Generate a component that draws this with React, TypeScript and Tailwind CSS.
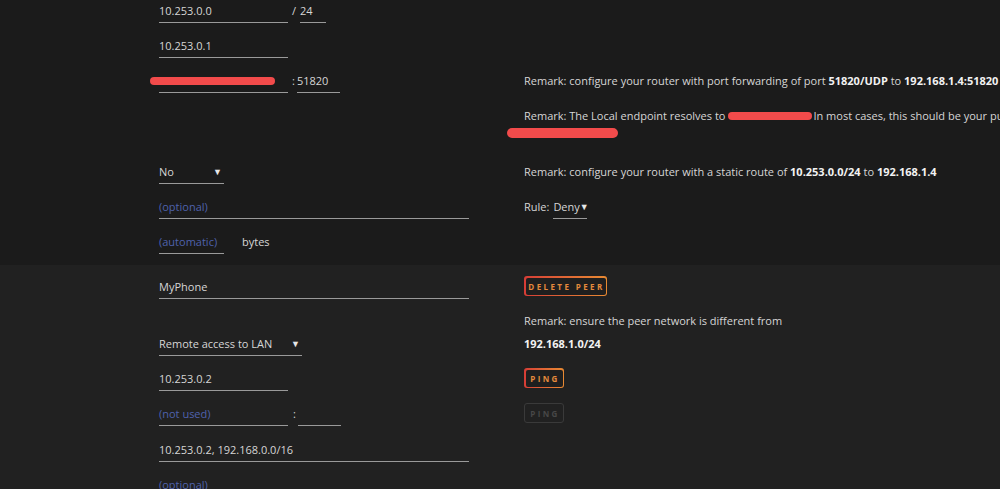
import React from 'react';

const font = { fontFamily: '"Open Sans", "Liberation Sans", sans-serif' };

interface FieldProps {
  value?: string;
  placeholder?: string;
  width: string;
  select?: boolean;
  children?: React.ReactNode;
}

const Field: React.FC<FieldProps> = ({ value, placeholder, width, select, children }) => (
  <div className={`${width} flex h-[20px] items-start justify-between border-b border-[#9a9a9a] leading-[15px]`}>
    {children ?? (
      <span className={value ? 'text-[#d6d6d6]' : 'text-[#4f62ad]'}>{value ?? placeholder}</span>
    )}
    {select && <span className="text-[9px] text-[#e6e6e6] pr-[2px]">▼</span>}
  </div>
);

const Blob: React.FC<{ className: string }> = ({ className }) => (
  <span className={`inline-block rounded-full bg-[#f24b4b] ${className}`} />
);

const Row: React.FC<{ h: string; left?: React.ReactNode; right?: React.ReactNode }> = ({ h, left, right }) => (
  <div className={`grid grid-cols-[365px_1fr] ${h}`}>
    <div className="flex items-start">{left}</div>
    <div className="flex flex-col items-start whitespace-nowrap leading-[15px]">{right}</div>
  </div>
);

const Btn: React.FC<{ label: string; width: string; disabled?: boolean }> = ({ label, width, disabled }) =>
  disabled ? (
    <div className={`${width} -mt-[2.5px] h-[20px] rounded-[3px] border-[1.5px] border-[#3a3a3a] flex items-center justify-center pl-[2px] text-[8px] font-bold tracking-[2.4px] text-[#474747]`}>
      {label}
    </div>
  ) : (
    <div className={`${width} -mt-[2.5px] h-[20px] rounded-[3px] bg-gradient-to-r from-[#d63c36] to-[#e88a32] p-[1.5px]`}>
      <div className="h-full w-full rounded-[2px] bg-[#1f1f1f] flex items-center justify-center pl-[2px] text-[8px] font-bold tracking-[2.4px] text-[#e58a3c]">
        {label}
      </div>
    </div>
  );

export default function App() {
  return (
    <div style={font} className="h-[489px] w-[1000px] overflow-hidden text-[11px] text-[#d6d6d6]">
      {/* interface section */}
      <div className="h-[265px] bg-[#1b1b1b] pl-[159px] pt-[3px]">
        <Row
          h="h-[35px]"
          left={
            <div className="flex items-start">
              <Field value="10.253.0.0" width="w-[129px]" />
              <span className="ml-[4px] leading-[15px]">/</span>
              <div className="ml-[4px]">
                <Field value="24" width="w-[26px]" />
              </div>
            </div>
          }
        />
        <Row h="h-[35px]" left={<Field value="10.253.0.1" width="w-[129px]" />} />
        <Row
          h="h-[35px]"
          left={
            <div className="flex items-start">
              <Field width="w-[129px]">
                <Blob className="-ml-[9px] mt-[4px] h-[8px] w-[125px]" />
              </Field>
              <span className="ml-[4px] leading-[15px]">:</span>
              <div className="ml-[2px]">
                <Field value="51820" width="w-[43px]" />
              </div>
            </div>
          }
          right={
            <span>
              Remark: configure your router with port forwarding of port{' '}
              <b className="text-[#f2f2f2]">51820/UDP</b> to <b className="text-[#f2f2f2]">192.168.1.4:51820</b>
            </span>
          }
        />
        <Row
          h="h-[56px]"
          right={
            <>
              <span className="flex items-center">
                Remark: The Local endpoint resolves to
                <Blob className="ml-[3px] h-[8px] w-[84px]" />
                <span className="ml-[1px]">In most cases, this should be your public IP address</span>
              </span>
              <Blob className="-ml-[17px] mt-[5px] h-[10px] w-[111px]" />
            </>
          }
        />
        <Row
          h="h-[35px]"
          left={<Field value="No" width="w-[65px]" select />}
          right={
            <span>
              Remark: configure your router with a static route of{' '}
              <b className="text-[#f2f2f2]">10.253.0.0/24</b> to <b className="text-[#f2f2f2]">192.168.1.4</b>
            </span>
          }
        />
        <Row
          h="h-[35px]"
          left={<Field placeholder="(optional)" width="w-[310px]" />}
          right={
            <div className="flex items-start">
              <span>Rule:</span>
              <div className="ml-[4px]">
                <Field value="Deny" width="w-[34px]" select />
              </div>
            </div>
          }
        />
        <Row
          h="h-[30px]"
          left={
            <div className="flex items-start">
              <Field placeholder="(automatic)" width="w-[65px]" />
              <span className="ml-[18px] leading-[15px]">bytes</span>
            </div>
          }
        />
      </div>

      {/* peer section */}
      <div className="h-[224px] bg-[#212121] pl-[159px] pt-[13.5px]">
        <Row
          h="h-[34px]"
          left={<Field value="MyPhone" width="w-[310px]" />}
          right={<Btn label="DELETE PEER" width="w-[83px]" />}
        />
        <Row h="h-[23px]" right={<span>Remark: ensure the peer network is different from</span>} />
        <Row
          h="h-[35px]"
          left={<Field value="Remote access to LAN" width="w-[143px]" select />}
          right={<b className="text-[#f2f2f2]">192.168.1.0/24</b>}
        />
        <Row
          h="h-[35px]"
          left={<Field value="10.253.0.2" width="w-[129px]" />}
          right={<Btn label="PING" width="w-[40px]" />}
        />
        <Row
          h="h-[36px]"
          left={
            <div className="flex items-start">
              <Field placeholder="(not used)" width="w-[129px]" />
              <span className="ml-[5px] leading-[15px]">:</span>
              <div className="ml-[2px]">
                <Field value="" width="w-[43px]" />
              </div>
            </div>
          }
          right={<Btn label="PING" width="w-[40px]" disabled />}
        />
        <Row h="h-[35px]" left={<Field value="10.253.0.2, 192.168.0.0/16" width="w-[310px]" />} />
        <Row h="h-[35px]" left={<Field placeholder="(optional)" width="w-[310px]" />} />
      </div>
    </div>
  );
}
